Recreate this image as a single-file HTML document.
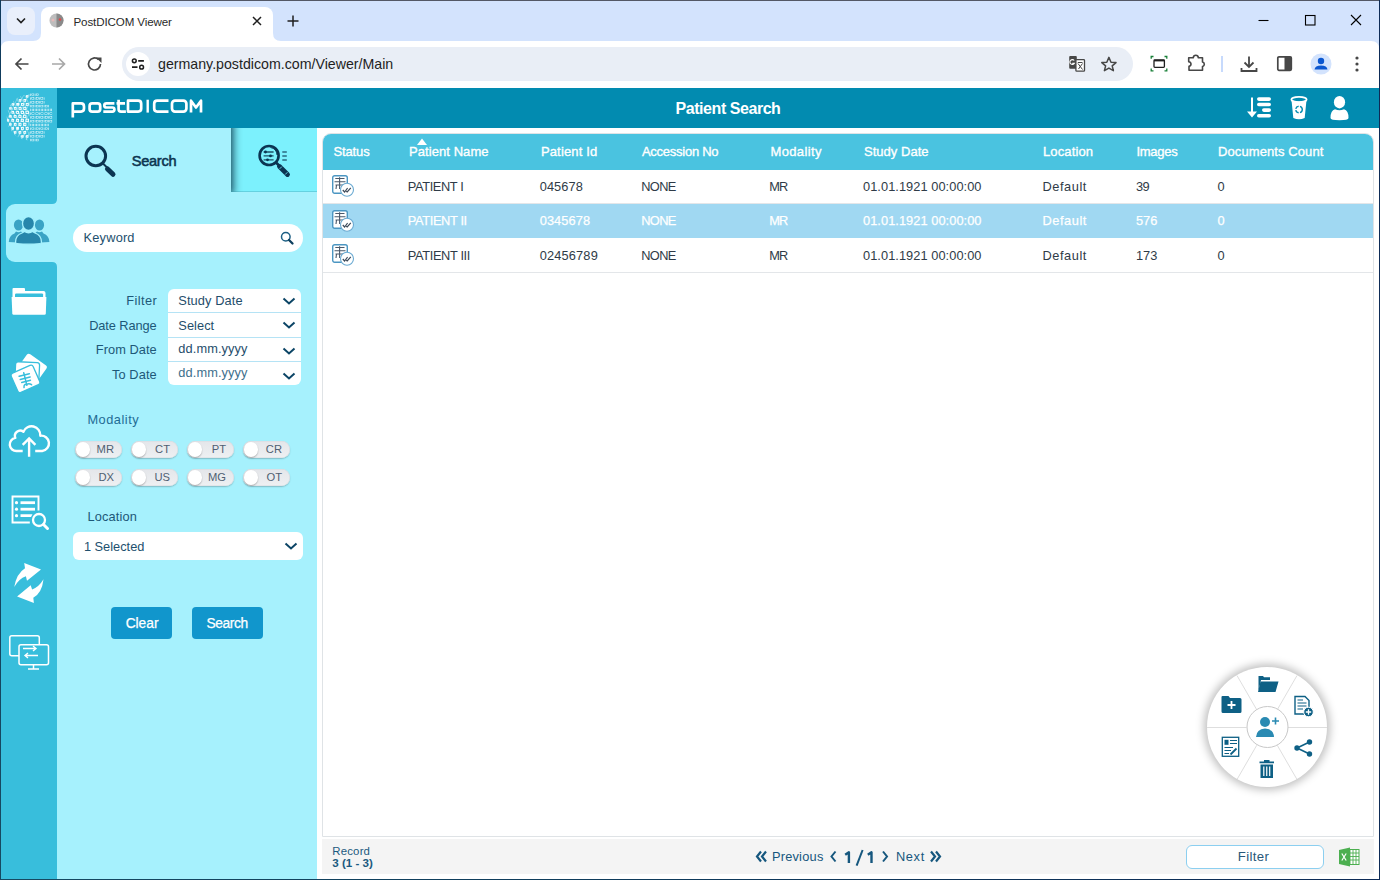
<!DOCTYPE html><html><head><meta charset="utf-8"><style>
*{box-sizing:border-box;margin:0;padding:0}
html,body{width:1380px;height:880px;overflow:hidden;background:#fff;font-family:"Liberation Sans",sans-serif}
.t{position:absolute;white-space:nowrap;line-height:1}
.a{position:absolute}
svg{position:absolute;overflow:visible}
</style></head><body>
<div class="a" style="left:0;top:0;width:1380px;height:41px;background:#d3e3fd"></div><div class="a" style="left:7px;top:7px;width:28px;height:28px;border-radius:8px;background:#e9effb"></div><svg style="left:0;top:0" width="40" height="40"><path d="M17 18.5 L21 22.5 L25 18.5" fill="none" stroke="#1f1f1f" stroke-width="1.6"/></svg><div class="a" style="left:41px;top:7px;width:232px;height:35px;background:#fff;border-radius:8px 8px 0 0"></div><svg style="left:33px;top:33px" width="8" height="8"><path d="M0 8 Q8 8 8 0 L8 8 Z" fill="#fff"/></svg><svg style="left:273px;top:33px" width="8" height="8"><path d="M8 8 Q0 8 0 0 L0 8 Z" fill="#fff"/></svg><svg style="left:49px;top:13px" width="15" height="15"><circle cx="7.5" cy="7.5" r="7" fill="#bdbdbd"/><path d="M7.5 0.5 A7 7 0 0 1 7.5 14.5 Z" fill="#8a8a8a"/><circle cx="11" cy="6.5" r="1.3" fill="#e04848"/><circle cx="4" cy="7" r="1.5" fill="#f0b8b8" opacity=".8"/></svg><div class="t" style="left:73.5px;top:16.18px;font-size:11.6px;color:#2a2a2a;font-weight:normal;letter-spacing:-0.123px;">PostDICOM Viewer</div>
<svg style="left:250px;top:14px" width="14" height="14"><path d="M3 3 L11 11 M11 3 L3 11" stroke="#1f1f1f" stroke-width="1.5"/></svg><svg style="left:285px;top:13px" width="16" height="16"><path d="M8 2.5 V13.5 M2.5 8 H13.5" stroke="#1f1f1f" stroke-width="1.5"/></svg><svg style="left:1250px;top:8px" width="120" height="24"><path d="M8.5 12.5 H18.5" stroke="#000" stroke-width="1.1"/><rect x="55.5" y="7.5" width="9.5" height="9.5" fill="none" stroke="#000" stroke-width="1.1"/><path d="M101 7 L111 17 M111 7 L101 17" stroke="#000" stroke-width="1.1"/></svg><div class="a" style="left:0;top:41px;width:1380px;height:47px;background:#fff"></div><svg style="left:1px;top:41px" width="9" height="9"><path d="M0 0 H8 Q0 0 0 8 Z" fill="#d3e3fd"/></svg><svg style="left:1370px;top:41px" width="9" height="9"><path d="M9 0 H1 Q9 0 9 8 Z" fill="#d3e3fd"/></svg><svg style="left:10px;top:54px" width="100" height="20"><path d="M18.5 10 H6.5 M11.5 4.5 L6 10 L11.5 15.5" fill="none" stroke="#474747" stroke-width="1.7"/><path d="M42 10 H54 M49 4.5 L54.5 10 L49 15.5" fill="none" stroke="#a8a8a8" stroke-width="1.7"/><path d="M90.5 10 A6 6 0 1 1 88.6 5.6" fill="none" stroke="#474747" stroke-width="1.7"/><path d="M86 3.5 L91.5 3.5 L91.5 9 Z" fill="#474747"/></svg><div class="a" style="left:122px;top:47px;width:1011px;height:34px;border-radius:17px;background:#e9eef6"></div><div class="a" style="left:126px;top:52px;width:24px;height:24px;border-radius:12px;background:#fff"></div><svg style="left:126px;top:52px" width="24" height="24"><path d="M12.2 8.8 H17.9 M6 15.2 H11.5" stroke="#1f1f1f" stroke-width="1.7"/><circle cx="8.3" cy="8.8" r="1.9" fill="none" stroke="#1f1f1f" stroke-width="1.5"/><circle cx="15.6" cy="15.2" r="1.9" fill="none" stroke="#1f1f1f" stroke-width="1.5"/></svg><div class="t" style="left:158px;top:57.48px;font-size:14.2px;color:#1f1f1f;font-weight:normal;">germany.postdicom.com/Viewer/Main</div>
<svg style="left:1060px;top:50px" width="150" height="28"><rect x="9.2" y="6" width="7.6" height="12.7" rx="1" fill="#474747"/><path d="M14.2 10.5 A2.4 2.4 0 1 0 14.4 13.2 H12.3" fill="none" stroke="#fff" stroke-width="1.1"/><rect x="15.9" y="9.6" width="8.6" height="11.6" rx="0.8" fill="#fff" stroke="#474747" stroke-width="1.3"/><path d="M18 13.5 L22.5 19.5 M22.5 13.5 L18.5 19 M17.8 12.5 H22.5" stroke="#474747" stroke-width="1"/><path d="M48.9 7.4 L51 12.2 L56 12.6 L52.2 15.9 L53.4 20.7 L48.9 18.1 L44.4 20.7 L45.6 15.9 L41.8 12.6 L46.8 12.2 Z" fill="none" stroke="#474747" stroke-width="1.5" stroke-linejoin="round"/><rect x="94" y="9.9" width="10.4" height="7.5" rx="0.8" fill="none" stroke="#1f1f1f" stroke-width="1.3"/><path d="M94 10.6 H104.4" stroke="#1f1f1f" stroke-width="1.6"/><path d="M91.2 8.8 V6.5 H93.5 M104.5 6.5 H106.8 V8.8 M106.8 18.5 V20.8 H104.5 M93.5 20.8 H91.2 V18.5" fill="none" stroke="#188038" stroke-width="1.3"/><path d="M128.7 7.8 H133.2 Q133.5 5.3 135.8 5.3 Q138.1 5.3 138.4 7.8 H142.5 V12 Q144.3 12.4 144.3 14.3 Q144.3 16.2 142.5 16.6 V20.2 H129 V16.4 Q131 16.1 131 14.1 Q131 12.1 128.7 11.8 Z" fill="none" stroke="#474747" stroke-width="1.6" stroke-linejoin="round"/></svg><div class="a" style="left:1221px;top:56px;width:2px;height:16px;background:#c7dafc"></div><svg style="left:1239px;top:54px" width="20" height="20"><path d="M10 2.5 V13 M5.5 8.5 L10 13 L14.5 8.5" fill="none" stroke="#474747" stroke-width="1.8"/><path d="M2.5 14 V17 H17.5 V14" fill="none" stroke="#474747" stroke-width="1.8"/></svg><svg style="left:1276px;top:55px" width="18" height="18"><rect x="1.8" y="1.8" width="13.5" height="13.5" rx="1.2" fill="none" stroke="#474747" stroke-width="1.7"/><rect x="8.5" y="1.8" width="6.8" height="13.5" fill="#474747"/></svg><svg style="left:1310px;top:53px" width="22" height="22"><circle cx="11" cy="11" r="10.5" fill="#d3e3fd"/><circle cx="11" cy="8" r="3.2" fill="#0b57d0"/><path d="M4.5 16.5 Q5 12.5 11 12.5 Q17 12.5 17.5 16.5 Z" fill="#0b57d0"/></svg><svg style="left:1350px;top:55px" width="14" height="18"><circle cx="7" cy="3" r="1.6" fill="#474747"/><circle cx="7" cy="9" r="1.6" fill="#474747"/><circle cx="7" cy="15" r="1.6" fill="#474747"/></svg><div class="a" style="left:0;top:88px;width:57px;height:792px;background:#38bedc"></div><div class="a" style="left:57px;top:88px;width:1323px;height:40px;background:#028bb0"></div><div class="a" style="left:57px;top:128px;width:260px;height:752px;background:#a6f1fd"></div><div class="a" style="left:317px;top:128px;width:1063px;height:752px;background:#fff"></div><svg style="left:0;top:0" width="60" height="150"><rect x="30.30" y="93.60" width="0.6" height="2.4" fill="#fff" opacity="0.9"/><rect x="31.75" y="93.90" width="2.1" height="1.8" fill="none" stroke="#fff" stroke-width="0.5" opacity="0.9"/><rect x="34.80" y="93.60" width="0.6" height="2.4" fill="#fff" opacity="0.9"/><rect x="36.25" y="93.90" width="2.1" height="1.8" fill="none" stroke="#fff" stroke-width="0.5" opacity="0.9"/><rect x="30.30" y="97.37" width="0.6" height="2.4" fill="#fff" opacity="0.9"/><rect x="31.75" y="97.67" width="2.1" height="1.8" fill="none" stroke="#fff" stroke-width="0.5" opacity="0.9"/><rect x="34.80" y="97.37" width="0.6" height="2.4" fill="#fff" opacity="0.9"/><rect x="36.25" y="97.67" width="2.1" height="1.8" fill="none" stroke="#fff" stroke-width="0.5" opacity="0.9"/><rect x="39.30" y="97.37" width="0.6" height="2.4" fill="#fff" opacity="0.9"/><rect x="40.75" y="97.67" width="2.1" height="1.8" fill="none" stroke="#fff" stroke-width="0.5" opacity="0.9"/><rect x="43.80" y="97.37" width="0.6" height="2.4" fill="#fff" opacity="0.9"/><rect x="30.30" y="101.14" width="0.6" height="2.4" fill="#fff" opacity="0.9"/><rect x="31.75" y="101.44" width="2.1" height="1.8" fill="none" stroke="#fff" stroke-width="0.5" opacity="0.9"/><rect x="34.80" y="101.14" width="0.6" height="2.4" fill="#fff" opacity="0.9"/><rect x="36.25" y="101.44" width="2.1" height="1.8" fill="none" stroke="#fff" stroke-width="0.5" opacity="0.9"/><rect x="39.30" y="101.14" width="0.6" height="2.4" fill="#fff" opacity="0.9"/><rect x="40.75" y="101.44" width="2.1" height="1.8" fill="none" stroke="#fff" stroke-width="0.5" opacity="0.9"/><rect x="43.80" y="101.14" width="0.6" height="2.4" fill="#fff" opacity="0.9"/><rect x="30.30" y="104.91" width="0.6" height="2.4" fill="#fff" opacity="0.9"/><rect x="31.75" y="105.21" width="2.1" height="1.8" fill="none" stroke="#fff" stroke-width="0.5" opacity="0.9"/><rect x="34.80" y="104.91" width="0.6" height="2.4" fill="#fff" opacity="0.9"/><rect x="36.25" y="105.21" width="2.1" height="1.8" fill="none" stroke="#fff" stroke-width="0.5" opacity="0.9"/><rect x="39.30" y="104.91" width="0.6" height="2.4" fill="#fff" opacity="0.9"/><rect x="40.75" y="105.21" width="2.1" height="1.8" fill="none" stroke="#fff" stroke-width="0.5" opacity="0.9"/><rect x="43.80" y="104.91" width="0.6" height="2.4" fill="#fff" opacity="0.9"/><rect x="45.25" y="105.21" width="2.1" height="1.8" fill="none" stroke="#fff" stroke-width="0.5" opacity="0.9"/><rect x="48.30" y="104.91" width="0.6" height="2.4" fill="#fff" opacity="0.9"/><rect x="30.30" y="108.68" width="0.6" height="2.4" fill="#fff" opacity="0.9"/><rect x="31.80" y="108.68" width="0.7" height="2.4" fill="#fff" opacity="0.9"/><rect x="33.20" y="108.68" width="0.7" height="2.4" fill="#fff" opacity="0.9"/><rect x="34.80" y="108.68" width="0.6" height="2.4" fill="#fff" opacity="0.9"/><rect x="36.30" y="108.68" width="0.7" height="2.4" fill="#fff" opacity="0.9"/><rect x="37.70" y="108.68" width="0.7" height="2.4" fill="#fff" opacity="0.9"/><rect x="39.30" y="108.68" width="0.6" height="2.4" fill="#fff" opacity="0.9"/><rect x="40.80" y="108.68" width="0.7" height="2.4" fill="#fff" opacity="0.9"/><rect x="42.20" y="108.68" width="0.7" height="2.4" fill="#fff" opacity="0.9"/><rect x="43.80" y="108.68" width="0.6" height="2.4" fill="#fff" opacity="0.9"/><rect x="45.30" y="108.68" width="0.7" height="2.4" fill="#fff" opacity="0.9"/><rect x="46.70" y="108.68" width="0.7" height="2.4" fill="#fff" opacity="0.9"/><rect x="48.30" y="108.68" width="0.6" height="2.4" fill="#fff" opacity="0.9"/><rect x="49.80" y="108.68" width="0.7" height="2.4" fill="#fff" opacity="0.9"/><rect x="51.20" y="108.68" width="0.7" height="2.4" fill="#fff" opacity="0.9"/><rect x="30.30" y="112.45" width="0.6" height="2.4" fill="#fff" opacity="0.9"/><rect x="31.75" y="112.75" width="2.1" height="1.8" fill="none" stroke="#fff" stroke-width="0.5" opacity="0.9"/><rect x="34.80" y="112.45" width="0.6" height="2.4" fill="#fff" opacity="0.9"/><rect x="36.25" y="112.75" width="2.1" height="1.8" fill="none" stroke="#fff" stroke-width="0.5" opacity="0.9"/><rect x="39.30" y="112.45" width="0.6" height="2.4" fill="#fff" opacity="0.9"/><rect x="40.75" y="112.75" width="2.1" height="1.8" fill="none" stroke="#fff" stroke-width="0.5" opacity="0.9"/><rect x="43.80" y="112.45" width="0.6" height="2.4" fill="#fff" opacity="0.9"/><rect x="45.25" y="112.75" width="2.1" height="1.8" fill="none" stroke="#fff" stroke-width="0.5" opacity="0.9"/><rect x="48.30" y="112.45" width="0.6" height="2.4" fill="#fff" opacity="0.9"/><rect x="49.75" y="112.75" width="2.1" height="1.8" fill="none" stroke="#fff" stroke-width="0.5" opacity="0.9"/><rect x="30.30" y="116.22" width="0.6" height="2.4" fill="#fff" opacity="0.9"/><rect x="31.75" y="116.52" width="2.1" height="1.8" fill="none" stroke="#fff" stroke-width="0.5" opacity="0.9"/><rect x="34.80" y="116.22" width="0.6" height="2.4" fill="#fff" opacity="0.9"/><rect x="36.25" y="116.52" width="2.1" height="1.8" fill="none" stroke="#fff" stroke-width="0.5" opacity="0.9"/><rect x="39.30" y="116.22" width="0.6" height="2.4" fill="#fff" opacity="0.9"/><rect x="40.75" y="116.52" width="2.1" height="1.8" fill="none" stroke="#fff" stroke-width="0.5" opacity="0.9"/><rect x="43.80" y="116.22" width="0.6" height="2.4" fill="#fff" opacity="0.9"/><rect x="45.25" y="116.52" width="2.1" height="1.8" fill="none" stroke="#fff" stroke-width="0.5" opacity="0.9"/><rect x="48.30" y="116.22" width="0.6" height="2.4" fill="#fff" opacity="0.9"/><rect x="49.75" y="116.52" width="2.1" height="1.8" fill="none" stroke="#fff" stroke-width="0.5" opacity="0.9"/><rect x="30.30" y="119.99" width="0.6" height="2.4" fill="#fff" opacity="0.9"/><rect x="31.75" y="120.29" width="2.1" height="1.8" fill="none" stroke="#fff" stroke-width="0.5" opacity="0.9"/><rect x="34.80" y="119.99" width="0.6" height="2.4" fill="#fff" opacity="0.9"/><rect x="36.25" y="120.29" width="2.1" height="1.8" fill="none" stroke="#fff" stroke-width="0.5" opacity="0.9"/><rect x="39.30" y="119.99" width="0.6" height="2.4" fill="#fff" opacity="0.9"/><rect x="40.75" y="120.29" width="2.1" height="1.8" fill="none" stroke="#fff" stroke-width="0.5" opacity="0.9"/><rect x="43.80" y="119.99" width="0.6" height="2.4" fill="#fff" opacity="0.9"/><rect x="45.25" y="120.29" width="2.1" height="1.8" fill="none" stroke="#fff" stroke-width="0.5" opacity="0.9"/><rect x="48.30" y="119.99" width="0.6" height="2.4" fill="#fff" opacity="0.9"/><rect x="49.75" y="120.29" width="2.1" height="1.8" fill="none" stroke="#fff" stroke-width="0.5" opacity="0.9"/><rect x="30.30" y="123.76" width="0.6" height="2.4" fill="#fff" opacity="0.9"/><rect x="31.80" y="123.76" width="0.7" height="2.4" fill="#fff" opacity="0.9"/><rect x="33.20" y="123.76" width="0.7" height="2.4" fill="#fff" opacity="0.9"/><rect x="34.80" y="123.76" width="0.6" height="2.4" fill="#fff" opacity="0.9"/><rect x="36.30" y="123.76" width="0.7" height="2.4" fill="#fff" opacity="0.9"/><rect x="37.70" y="123.76" width="0.7" height="2.4" fill="#fff" opacity="0.9"/><rect x="39.30" y="123.76" width="0.6" height="2.4" fill="#fff" opacity="0.9"/><rect x="40.80" y="123.76" width="0.7" height="2.4" fill="#fff" opacity="0.9"/><rect x="42.20" y="123.76" width="0.7" height="2.4" fill="#fff" opacity="0.9"/><rect x="43.80" y="123.76" width="0.6" height="2.4" fill="#fff" opacity="0.9"/><rect x="45.30" y="123.76" width="0.7" height="2.4" fill="#fff" opacity="0.9"/><rect x="46.70" y="123.76" width="0.7" height="2.4" fill="#fff" opacity="0.9"/><rect x="48.30" y="123.76" width="0.6" height="2.4" fill="#fff" opacity="0.9"/><rect x="30.30" y="127.53" width="0.6" height="2.4" fill="#fff" opacity="0.9"/><rect x="31.75" y="127.83" width="2.1" height="1.8" fill="none" stroke="#fff" stroke-width="0.5" opacity="0.9"/><rect x="34.80" y="127.53" width="0.6" height="2.4" fill="#fff" opacity="0.9"/><rect x="36.25" y="127.83" width="2.1" height="1.8" fill="none" stroke="#fff" stroke-width="0.5" opacity="0.9"/><rect x="39.30" y="127.53" width="0.6" height="2.4" fill="#fff" opacity="0.9"/><rect x="40.75" y="127.83" width="2.1" height="1.8" fill="none" stroke="#fff" stroke-width="0.5" opacity="0.9"/><rect x="43.80" y="127.53" width="0.6" height="2.4" fill="#fff" opacity="0.9"/><rect x="45.25" y="127.83" width="2.1" height="1.8" fill="none" stroke="#fff" stroke-width="0.5" opacity="0.9"/><rect x="48.30" y="127.53" width="0.6" height="2.4" fill="#fff" opacity="0.9"/><rect x="30.30" y="131.30" width="0.6" height="2.4" fill="#fff" opacity="0.9"/><rect x="31.75" y="131.60" width="2.1" height="1.8" fill="none" stroke="#fff" stroke-width="0.5" opacity="0.9"/><rect x="34.80" y="131.30" width="0.6" height="2.4" fill="#fff" opacity="0.9"/><rect x="36.25" y="131.60" width="2.1" height="1.8" fill="none" stroke="#fff" stroke-width="0.5" opacity="0.9"/><rect x="39.30" y="131.30" width="0.6" height="2.4" fill="#fff" opacity="0.9"/><rect x="40.75" y="131.60" width="2.1" height="1.8" fill="none" stroke="#fff" stroke-width="0.5" opacity="0.9"/><rect x="43.80" y="131.30" width="0.6" height="2.4" fill="#fff" opacity="0.9"/><rect x="30.30" y="135.07" width="0.6" height="2.4" fill="#fff" opacity="0.9"/><rect x="31.75" y="135.37" width="2.1" height="1.8" fill="none" stroke="#fff" stroke-width="0.5" opacity="0.9"/><rect x="34.80" y="135.07" width="0.6" height="2.4" fill="#fff" opacity="0.9"/><rect x="36.25" y="135.37" width="2.1" height="1.8" fill="none" stroke="#fff" stroke-width="0.5" opacity="0.9"/><rect x="39.30" y="135.07" width="0.6" height="2.4" fill="#fff" opacity="0.9"/><rect x="40.75" y="135.37" width="2.1" height="1.8" fill="none" stroke="#fff" stroke-width="0.5" opacity="0.9"/><rect x="43.80" y="135.07" width="0.6" height="2.4" fill="#fff" opacity="0.9"/><rect x="30.30" y="138.84" width="0.6" height="2.4" fill="#fff" opacity="0.9"/><rect x="31.75" y="139.14" width="2.1" height="1.8" fill="none" stroke="#fff" stroke-width="0.5" opacity="0.9"/><rect x="34.80" y="138.84" width="0.6" height="2.4" fill="#fff" opacity="0.9"/><rect x="36.25" y="139.14" width="2.1" height="1.8" fill="none" stroke="#fff" stroke-width="0.5" opacity="0.9"/><clipPath id="lc"><path d="M29.8 94.2 A23.2 23.2 0 0 0 29.8 140.6 Z"/></clipPath><g clip-path="url(#lc)"><rect x="26.44" y="95.64" width="1.52" height="1.52" fill="none" stroke="#fff" stroke-width="0.9"/><rect x="23.94" y="99.54" width="1.71" height="1.71" fill="none" stroke="#fff" stroke-width="0.9"/><rect x="19.20" y="99.60" width="1.61" height="1.61" fill="none" stroke="#fff" stroke-width="0.9"/><rect x="26.22" y="103.42" width="1.96" height="1.96" fill="none" stroke="#fff" stroke-width="0.9"/><rect x="21.47" y="103.47" width="1.87" height="1.87" fill="none" stroke="#fff" stroke-width="0.9"/><rect x="16.74" y="103.54" width="1.71" height="1.71" fill="none" stroke="#fff" stroke-width="0.9"/><rect x="12.04" y="103.64" width="1.51" height="1.51" fill="none" stroke="#fff" stroke-width="0.9"/><rect x="23.73" y="107.33" width="2.13" height="2.13" fill="none" stroke="#fff" stroke-width="0.9"/><rect x="19.02" y="107.42" width="1.97" height="1.97" fill="none" stroke="#fff" stroke-width="0.9"/><rect x="14.32" y="107.52" width="1.75" height="1.75" fill="none" stroke="#fff" stroke-width="0.9"/><rect x="9.64" y="107.64" width="1.52" height="1.52" fill="none" stroke="#fff" stroke-width="0.9"/><rect x="26.00" y="111.20" width="2.39" height="2.39" fill="none" stroke="#fff" stroke-width="0.9"/><rect x="21.29" y="111.29" width="2.21" height="2.21" fill="none" stroke="#fff" stroke-width="0.9"/><rect x="16.61" y="111.41" width="1.98" height="1.98" fill="none" stroke="#fff" stroke-width="0.9"/><rect x="11.94" y="111.54" width="1.72" height="1.72" fill="none" stroke="#fff" stroke-width="0.9"/><rect x="23.58" y="115.18" width="2.43" height="2.43" fill="none" stroke="#fff" stroke-width="0.9"/><rect x="18.92" y="115.32" width="2.16" height="2.16" fill="none" stroke="#fff" stroke-width="0.9"/><rect x="14.25" y="115.45" width="1.90" height="1.90" fill="none" stroke="#fff" stroke-width="0.9"/><rect x="9.59" y="115.59" width="1.63" height="1.63" fill="none" stroke="#fff" stroke-width="0.9"/><rect x="25.96" y="119.16" width="2.49" height="2.49" fill="none" stroke="#fff" stroke-width="0.9"/><rect x="21.27" y="119.27" width="2.27" height="2.27" fill="none" stroke="#fff" stroke-width="0.9"/><rect x="16.59" y="119.39" width="2.01" height="2.01" fill="none" stroke="#fff" stroke-width="0.9"/><rect x="11.93" y="119.53" width="1.75" height="1.75" fill="none" stroke="#fff" stroke-width="0.9"/><rect x="7.26" y="119.66" width="1.48" height="1.48" fill="none" stroke="#fff" stroke-width="0.9"/><rect x="23.69" y="123.29" width="2.23" height="2.23" fill="none" stroke="#fff" stroke-width="0.9"/><rect x="18.98" y="123.38" width="2.04" height="2.04" fill="none" stroke="#fff" stroke-width="0.9"/><rect x="14.30" y="123.50" width="1.81" height="1.81" fill="none" stroke="#fff" stroke-width="0.9"/><rect x="9.62" y="123.62" width="1.56" height="1.56" fill="none" stroke="#fff" stroke-width="0.9"/><rect x="26.16" y="127.36" width="2.07" height="2.07" fill="none" stroke="#fff" stroke-width="0.9"/><rect x="21.42" y="127.42" width="1.97" height="1.97" fill="none" stroke="#fff" stroke-width="0.9"/><rect x="16.70" y="127.50" width="1.79" height="1.79" fill="none" stroke="#fff" stroke-width="0.9"/><rect x="12.01" y="127.61" width="1.58" height="1.58" fill="none" stroke="#fff" stroke-width="0.9"/><rect x="23.89" y="131.49" width="1.82" height="1.82" fill="none" stroke="#fff" stroke-width="0.9"/><rect x="19.15" y="131.55" width="1.71" height="1.71" fill="none" stroke="#fff" stroke-width="0.9"/><rect x="14.43" y="131.63" width="1.54" height="1.54" fill="none" stroke="#fff" stroke-width="0.9"/><rect x="26.39" y="135.59" width="1.63" height="1.63" fill="none" stroke="#fff" stroke-width="0.9"/><rect x="21.62" y="135.62" width="1.56" height="1.56" fill="none" stroke="#fff" stroke-width="0.9"/><path d="M-63.2 92 L-37.2 146" stroke="#fff" stroke-width="0.45" opacity="0.75"/><path d="M-37.2 92 L-63.2 146" stroke="#fff" stroke-width="0.45" opacity="0.75"/><path d="M-58.4 92 L-32.4 146" stroke="#fff" stroke-width="0.45" opacity="0.75"/><path d="M-32.4 92 L-58.4 146" stroke="#fff" stroke-width="0.45" opacity="0.75"/><path d="M-53.6 92 L-27.6 146" stroke="#fff" stroke-width="0.45" opacity="0.75"/><path d="M-27.6 92 L-53.6 146" stroke="#fff" stroke-width="0.45" opacity="0.75"/><path d="M-48.8 92 L-22.8 146" stroke="#fff" stroke-width="0.45" opacity="0.75"/><path d="M-22.8 92 L-48.8 146" stroke="#fff" stroke-width="0.45" opacity="0.75"/><path d="M-44.0 92 L-18.0 146" stroke="#fff" stroke-width="0.45" opacity="0.75"/><path d="M-18.0 92 L-44.0 146" stroke="#fff" stroke-width="0.45" opacity="0.75"/><path d="M-39.2 92 L-13.2 146" stroke="#fff" stroke-width="0.45" opacity="0.75"/><path d="M-13.2 92 L-39.2 146" stroke="#fff" stroke-width="0.45" opacity="0.75"/><path d="M-34.4 92 L-8.4 146" stroke="#fff" stroke-width="0.45" opacity="0.75"/><path d="M-8.4 92 L-34.4 146" stroke="#fff" stroke-width="0.45" opacity="0.75"/><path d="M-29.6 92 L-3.6 146" stroke="#fff" stroke-width="0.45" opacity="0.75"/><path d="M-3.6 92 L-29.6 146" stroke="#fff" stroke-width="0.45" opacity="0.75"/><path d="M-24.8 92 L1.2 146" stroke="#fff" stroke-width="0.45" opacity="0.75"/><path d="M1.2 92 L-24.8 146" stroke="#fff" stroke-width="0.45" opacity="0.75"/><path d="M-20.0 92 L6.0 146" stroke="#fff" stroke-width="0.45" opacity="0.75"/><path d="M6.0 92 L-20.0 146" stroke="#fff" stroke-width="0.45" opacity="0.75"/><path d="M-15.2 92 L10.8 146" stroke="#fff" stroke-width="0.45" opacity="0.75"/><path d="M10.8 92 L-15.2 146" stroke="#fff" stroke-width="0.45" opacity="0.75"/><path d="M-10.4 92 L15.6 146" stroke="#fff" stroke-width="0.45" opacity="0.75"/><path d="M15.6 92 L-10.4 146" stroke="#fff" stroke-width="0.45" opacity="0.75"/><path d="M-5.6 92 L20.4 146" stroke="#fff" stroke-width="0.45" opacity="0.75"/><path d="M20.4 92 L-5.6 146" stroke="#fff" stroke-width="0.45" opacity="0.75"/><path d="M-0.8 92 L25.2 146" stroke="#fff" stroke-width="0.45" opacity="0.75"/><path d="M25.2 92 L-0.8 146" stroke="#fff" stroke-width="0.45" opacity="0.75"/><path d="M4.0 92 L30.0 146" stroke="#fff" stroke-width="0.45" opacity="0.75"/><path d="M30.0 92 L4.0 146" stroke="#fff" stroke-width="0.45" opacity="0.75"/><path d="M8.8 92 L34.8 146" stroke="#fff" stroke-width="0.45" opacity="0.75"/><path d="M34.8 92 L8.8 146" stroke="#fff" stroke-width="0.45" opacity="0.75"/><path d="M13.6 92 L39.6 146" stroke="#fff" stroke-width="0.45" opacity="0.75"/><path d="M39.6 92 L13.6 146" stroke="#fff" stroke-width="0.45" opacity="0.75"/><path d="M18.4 92 L44.4 146" stroke="#fff" stroke-width="0.45" opacity="0.75"/><path d="M44.4 92 L18.4 146" stroke="#fff" stroke-width="0.45" opacity="0.75"/><path d="M23.2 92 L49.2 146" stroke="#fff" stroke-width="0.45" opacity="0.75"/><path d="M49.2 92 L23.2 146" stroke="#fff" stroke-width="0.45" opacity="0.75"/><path d="M28.0 92 L54.0 146" stroke="#fff" stroke-width="0.45" opacity="0.75"/><path d="M54.0 92 L28.0 146" stroke="#fff" stroke-width="0.45" opacity="0.75"/><path d="M32.8 92 L58.8 146" stroke="#fff" stroke-width="0.45" opacity="0.75"/><path d="M58.8 92 L32.8 146" stroke="#fff" stroke-width="0.45" opacity="0.75"/><path d="M37.6 92 L63.6 146" stroke="#fff" stroke-width="0.45" opacity="0.75"/><path d="M63.6 92 L37.6 146" stroke="#fff" stroke-width="0.45" opacity="0.75"/><path d="M42.4 92 L68.4 146" stroke="#fff" stroke-width="0.45" opacity="0.75"/><path d="M68.4 92 L42.4 146" stroke="#fff" stroke-width="0.45" opacity="0.75"/><path d="M47.2 92 L73.2 146" stroke="#fff" stroke-width="0.45" opacity="0.75"/><path d="M73.2 92 L47.2 146" stroke="#fff" stroke-width="0.45" opacity="0.75"/><path d="M52.0 92 L78.0 146" stroke="#fff" stroke-width="0.45" opacity="0.75"/><path d="M78.0 92 L52.0 146" stroke="#fff" stroke-width="0.45" opacity="0.75"/><path d="M56.8 92 L82.8 146" stroke="#fff" stroke-width="0.45" opacity="0.75"/><path d="M82.8 92 L56.8 146" stroke="#fff" stroke-width="0.45" opacity="0.75"/><path d="M61.6 92 L87.6 146" stroke="#fff" stroke-width="0.45" opacity="0.75"/><path d="M87.6 92 L61.6 146" stroke="#fff" stroke-width="0.45" opacity="0.75"/><path d="M66.4 92 L92.4 146" stroke="#fff" stroke-width="0.45" opacity="0.75"/><path d="M92.4 92 L66.4 146" stroke="#fff" stroke-width="0.45" opacity="0.75"/></g></svg><svg style="left:0;top:0" width="220" height="125"><g fill="none" stroke="#fff" stroke-width="2.7" stroke-linejoin="round"><path d="M72.8 117.6 V103.4 H81 Q84 103.4 84 106.4 V108.6 Q84 111.6 81 111.6 H72.8"/><rect x="89.6" y="103.4" width="10.6" height="8.2" rx="2.6"/><path d="M114.4 103.4 H106.5 Q104.3 103.4 104.3 105.4 Q104.3 107.5 106.5 107.5 H112.4 Q114.4 107.5 114.4 109.5 Q114.4 111.6 112.4 111.6 H103.3"/><path d="M118.6 99.7 V109.3 Q118.6 111.6 121 111.6 H125.9 M116.5 103.4 H125"/><path d="M128 100.7 H138.2 Q141.2 100.7 141.2 103.7 V108.6 Q141.2 111.6 138.2 111.6 H128 Z"/><path d="M147.7 99.7 V112.6" stroke-width="2.4"/><path d="M168.5 100.7 H157.2 Q154.2 100.7 154.2 103.7 V108.6 Q154.2 111.6 157.2 111.6 H168.5"/><rect x="172" y="100.7" width="14.4" height="10.9" rx="3"/><path d="M191 112.6 V100.7 L196 107.5 L201 100.7 V112.6"/></g></svg><div class="t" style="left:728px;transform:translateX(-50%);top:100.76px;font-size:16px;color:#fff;font-weight:bold;letter-spacing:-0.45px;">Patient Search</div>
<svg style="left:1240px;top:92px" width="40" height="32"><path d="M12 5.5 V21" stroke="#fff" stroke-width="2"/><path d="M7 19.5 H17 L12 25.5 Z" fill="#fff"/><rect x="17" y="5.3" width="14" height="3.6" rx="1.8" fill="#fff"/><rect x="17" y="10.7" width="14" height="3.6" rx="1.8" fill="#fff"/><rect x="22" y="16.3" width="9" height="3.6" rx="1.8" fill="#fff"/><rect x="17" y="21.9" width="14" height="3.6" rx="1.8" fill="#fff"/></svg><svg style="left:1286px;top:92px" width="26" height="32"><ellipse cx="13" cy="7.5" rx="7.6" ry="2.6" fill="none" stroke="#fff" stroke-width="1.8"/><path d="M5.5 8 L7.3 26 Q13 28.5 18.7 26 L20.5 8 Q13 11 5.5 8 Z" fill="#fff"/><circle cx="13" cy="17.5" r="3.3" fill="none" stroke="#028bb0" stroke-width="1.4" stroke-dasharray="4 1.4"/></svg><svg style="left:1328px;top:94px" width="24" height="30"><ellipse cx="11.5" cy="8.2" rx="5.6" ry="6.2" fill="#fff"/><path d="M2.5 24 Q2.5 16.2 7 15.2 Q11.5 17.5 16 15.2 Q20.5 16.2 20.5 24 Q20.5 26.2 11.5 26.2 Q2.5 26.2 2.5 24 Z" fill="#fff"/></svg><div class="a" style="left:6px;top:204px;width:51px;height:58px;background:#a6f1fd;border-radius:9px 0 0 9px"></div><svg style="left:52px;top:199px" width="5" height="5"><path d="M5 5 H0 Q5 5 5 0 Z" fill="#a6f1fd"/></svg><svg style="left:52px;top:262px" width="5" height="5"><path d="M5 0 H0 Q5 0 5 5 Z" fill="#a6f1fd"/></svg><svg style="left:0;top:190px" width="60" height="60"><g fill="#3aa3c5"><ellipse cx="18.5" cy="35" rx="4.6" ry="5.6"/><path d="M8.8 52 Q9 45.5 14.5 43.5 L16 41.5 Q18.5 43 21 41.5 L24 44 Q18 47 17.5 52.5 Z"/><ellipse cx="39.5" cy="35" rx="4.6" ry="5.6"/><path d="M49.4 52 Q49.2 45.5 43.5 43.5 L42 41.5 Q39.5 43 37 41.5 L34 44 Q40 47 40.5 52.5 Z"/></g><ellipse cx="28.5" cy="33.5" rx="6" ry="7" fill="#2786ab" stroke="#a6f1fd" stroke-width="1.3"/><path d="M15.5 52.5 Q15.5 45 22 43 L24.5 41.5 Q28.5 44 32.5 41.5 L35 43 Q41.5 45 41.5 52.5 Q41.5 54.2 28.5 54.2 Q15.5 54.2 15.5 52.5 Z" fill="#2786ab" stroke="#a6f1fd" stroke-width="1.3"/></svg><svg style="left:6px;top:282px" width="46" height="38"><path d="M6.5 14.9 V7 Q6.5 6 7.5 6 H18 Q19 6 19 7 V8.9 H37.5 Q39.5 8.9 39.5 11 V14.9 Z" fill="#fff"/><path d="M9 16 V12.6 Q9 11.4 10.2 11.4 H35.9 Q37.1 11.4 37.1 12.6 V16 Z" fill="#38bedc"/><path d="M5.6 14.9 H40.4 L39.8 31.6 Q39.7 32.8 38.5 32.8 H7.6 Q6.4 32.8 6.3 31.6 Z" fill="#fff"/></svg><svg style="left:6px;top:348px" width="48" height="50"><g transform="rotate(35.5 25.9 20.3)"><rect x="13.9" y="9.8" width="24" height="21" rx="2.5" fill="#fff"/></g><g transform="rotate(2.7 21.2 24.7)"><rect x="9.2" y="14.2" width="24" height="21" rx="2.5" fill="#fff" stroke="#38bedc" stroke-width="1.3"/></g><g transform="rotate(-23.8 19.5 30.9)"><rect x="7.5" y="20.4" width="24" height="21" rx="2.5" fill="#fff" stroke="#38bedc" stroke-width="1.3"/></g><g transform="rotate(-14 19.5 31)" fill="none" stroke="#38bedc" stroke-width="1.5" stroke-linecap="round"><path d="M19.3 24.5 V37.5"/><path d="M14 26.8 H24.5 M14.3 30.2 H24.5 M15 33.4 H24"/><path d="M16 39 Q16.5 35.5 19.3 36.5 Q22 35.5 24 38"/></g></svg><svg style="left:8px;top:424px" width="44" height="36"><path d="M14.7 27 H8.8 A6.6 6.6 0 0 1 7.3 13.9 A5.3 5.3 0 0 1 15.4 7.7 A8.8 8.8 0 0 1 32.3 11.7 A7.7 7.7 0 0 1 34.2 27 H27.2" fill="none" stroke="#fff" stroke-width="2.4" stroke-linejoin="round"/><path d="M21.1 14.2 V32.7 M14.7 20.8 L21.1 14.4 L27.4 20.8" fill="none" stroke="#fff" stroke-width="2.4"/></svg><svg style="left:8px;top:494px" width="44" height="40"><path d="M21.8 28.5 H4.5 V2.5 H30.5 V16.5" fill="none" stroke="#fff" stroke-width="1.9"/><circle cx="8.5" cy="8.7" r="1.6" fill="#fff"/><circle cx="8.5" cy="15.2" r="1.6" fill="#fff"/><circle cx="8.5" cy="21.7" r="1.6" fill="#fff"/><rect x="12.5" y="7.3" width="14.5" height="2.8" fill="#fff"/><rect x="12.5" y="13.8" width="14.5" height="2.8" fill="#fff"/><path d="M12.5 20.3 H24.5 L23 23.1 H12.5 Z" fill="#fff"/><circle cx="31" cy="26" r="6" fill="none" stroke="#fff" stroke-width="2.3"/><path d="M35.5 30.5 L39.5 34.5" stroke="#fff" stroke-width="3" stroke-linecap="round"/></svg><svg style="left:8px;top:558px" width="44" height="50"><path d="M6.25 29 Q8.5 15.5 17 10.2 L16.2 5.1 L33 11.6 L19 22.7 L17.9 18.2 Q11 20.5 6.25 29 Z" fill="#fff"/><path d="M35.5 21.3 Q31 29 24.1 31.5 L22.7 27.3 L9.1 38.6 L25.9 44.9 L25.3 39.8 Q34 35 35.5 21.3 Z" fill="#fff"/></svg><svg style="left:8px;top:634px" width="44" height="40"><rect x="1.8" y="1.8" width="29.5" height="20" rx="2" fill="none" stroke="#fff" stroke-width="1.5"/><rect x="11" y="10.7" width="29.5" height="20" rx="2" fill="#38bedc" stroke="#fff" stroke-width="1.5"/><path d="M25.5 30.7 V34.5 M20 35 H31" stroke="#fff" stroke-width="1.5"/><path d="M15 14.5 H28 M25 12 L28 14.5 L25 17" fill="none" stroke="#fff" stroke-width="1.4"/><path d="M30 21.5 H17 M20 19 L17 21.5 L20 24" fill="none" stroke="#fff" stroke-width="1.4"/></svg><div class="a" style="left:231px;top:128px;width:86px;height:64px;background:#7cf1fd;overflow:hidden"><div class="a" style="left:-20px;top:-6px;width:20px;height:72px;box-shadow:1px 0 8px 1px rgba(0,35,55,.85)"></div><div class="a" style="left:0;top:63px;width:86px;height:1px;background:rgba(60,150,170,.35)"></div></div><svg style="left:80px;top:140px" width="40" height="40"><circle cx="15.8" cy="16" r="9.8" fill="none" stroke="#0b3552" stroke-width="3"/><path d="M22.5 23 L27.5 28" stroke="#0b3552" stroke-width="2"/><path d="M27.5 29 L33 34.3" stroke="#0b3552" stroke-width="5" stroke-linecap="round"/></svg><svg style="left:240px;top:130px" width="60" height="60"><circle cx="29.1" cy="25.5" r="9.5" fill="none" stroke="#0b3552" stroke-width="2.6"/><path d="M23.6 22 H33.6 M23.6 25.9 H33.6 M23.6 29.8 H33.6" stroke="#1d4f66" stroke-width="1.3"/><circle cx="25.5" cy="22" r="1.4" fill="#0b3552"/><circle cx="30.5" cy="25.9" r="1.4" fill="#0b3552"/><circle cx="27.5" cy="29.8" r="1.4" fill="#0b3552"/><path d="M30.5 17.5 A8 8 0 0 1 37 25" fill="none" stroke="#0b3552" stroke-width="0.9"/><path d="M42.3 22 H46.8 M42.3 26 H46.8 M42.3 30 H46.8" stroke="#2a6a80" stroke-width="1.6"/><path d="M36 32.5 L39 35.5" stroke="#0b3552" stroke-width="2.6"/><path d="M39.5 36.5 L47.5 44.5" stroke="#0b3552" stroke-width="4.8" stroke-linecap="round"/><path d="M39.6 38.9 L41.9 36.6 M45.2 44.5 L47.5 42.2" stroke="#7cf1fd" stroke-width="0.8"/></svg><div class="t" style="left:131.7px;top:154.24px;font-size:14.6px;color:#0c3550;font-weight:normal;-webkit-text-stroke:0.55px #0c3550;letter-spacing:-0.276px;">Search</div>
<div class="a" style="left:73px;top:224px;width:230px;height:28px;border-radius:14px;background:#fff"></div><div class="t" style="left:83.6px;top:232.16px;font-size:12.8px;color:#22506e;font-weight:normal;letter-spacing:0.185px;">Keyword</div>
<svg style="left:278px;top:229px" width="18" height="18"><circle cx="7.8" cy="7.8" r="4.3" fill="none" stroke="#1d5f84" stroke-width="1.5"/><path d="M11 11 L14.5 14.5" stroke="#0d3f5e" stroke-width="2.3" stroke-linecap="round"/></svg><div class="a" style="left:168px;top:289px;width:133px;height:96px;border-radius:6px;background:#fff;overflow:hidden"><div class="a" style="left:0;top:23px;width:133px;height:1px;background:#b5e3f5"></div><div class="a" style="left:0;top:48px;width:133px;height:1px;background:#b5e3f5"></div><div class="a" style="left:0;top:72px;width:133px;height:1px;background:#b5e3f5"></div></div><div class="t" style="left:126.29999999999998px;top:294.96px;font-size:12.8px;color:#1d5878;font-weight:normal;letter-spacing:0.397px;">Filter</div>
<div class="t" style="left:89.19999999999999px;top:319.96px;font-size:12.8px;color:#1d5878;font-weight:normal;letter-spacing:-0.088px;">Date Range</div>
<div class="t" style="left:95.79999999999998px;top:344.46px;font-size:12.8px;color:#1d5878;font-weight:normal;letter-spacing:0.053px;">From Date</div>
<div class="t" style="left:111.99999999999999px;top:369.46px;font-size:12.8px;color:#1d5878;font-weight:normal;letter-spacing:0.101px;">To Date</div>
<div class="t" style="left:178.3px;top:294.96px;font-size:12.8px;color:#1f4e6b;font-weight:normal;letter-spacing:0.100px;">Study Date</div>
<div class="t" style="left:178.3px;top:319.96px;font-size:12.8px;color:#1f4e6b;font-weight:normal;letter-spacing:0.063px;">Select</div>
<div class="t" style="left:178.3px;top:343.36px;font-size:12.8px;color:#1f4e6b;font-weight:normal;letter-spacing:0.101px;">dd.mm.yyyy</div>
<div class="t" style="left:178.3px;top:367.36px;font-size:12.8px;color:#3e6f8c;font-weight:normal;letter-spacing:0.101px;">dd.mm.yyyy</div>
<svg style="left:281px;top:295.5px" width="16" height="10"><path d="M2.5 2.5 L8 7.5 L13.5 2.5" fill="none" stroke="#0c4566" stroke-width="2"/></svg><svg style="left:281px;top:320px" width="16" height="10"><path d="M2.5 2.5 L8 7.5 L13.5 2.5" fill="none" stroke="#0c4566" stroke-width="2"/></svg><svg style="left:281px;top:346px" width="16" height="10"><path d="M2.5 2.5 L8 7.5 L13.5 2.5" fill="none" stroke="#0c4566" stroke-width="2"/></svg><svg style="left:281px;top:370.5px" width="16" height="10"><path d="M2.5 2.5 L8 7.5 L13.5 2.5" fill="none" stroke="#0c4566" stroke-width="2"/></svg><div class="t" style="left:87.4px;top:413.96px;font-size:12.8px;color:#1f6c95;font-weight:normal;letter-spacing:0.517px;">Modality</div>
<div class="a" style="left:75px;top:441px;width:47px;height:16.5px;border-radius:8.25px;background:linear-gradient(#e4e6ea,#eef0f2);box-shadow:0 1px 1.5px rgba(0,0,0,.22), inset 0 0 0 0.6px #d6dadf"></div><div class="a" style="left:75.6px;top:441.8px;width:14.8px;height:14.8px;border-radius:7.4px;background:#fff;box-shadow:0 1px 1.5px rgba(0,0,0,.28)"></div><div class="t" style="right:1266px;top:443.52px;font-size:11.2px;color:#4f5f72;font-weight:normal;">MR</div>
<div class="a" style="left:131px;top:441px;width:47px;height:16.5px;border-radius:8.25px;background:linear-gradient(#e4e6ea,#eef0f2);box-shadow:0 1px 1.5px rgba(0,0,0,.22), inset 0 0 0 0.6px #d6dadf"></div><div class="a" style="left:131.6px;top:441.8px;width:14.8px;height:14.8px;border-radius:7.4px;background:#fff;box-shadow:0 1px 1.5px rgba(0,0,0,.28)"></div><div class="t" style="right:1210px;top:443.52px;font-size:11.2px;color:#4f5f72;font-weight:normal;">CT</div>
<div class="a" style="left:187px;top:441px;width:47px;height:16.5px;border-radius:8.25px;background:linear-gradient(#e4e6ea,#eef0f2);box-shadow:0 1px 1.5px rgba(0,0,0,.22), inset 0 0 0 0.6px #d6dadf"></div><div class="a" style="left:187.6px;top:441.8px;width:14.8px;height:14.8px;border-radius:7.4px;background:#fff;box-shadow:0 1px 1.5px rgba(0,0,0,.28)"></div><div class="t" style="right:1154px;top:443.52px;font-size:11.2px;color:#4f5f72;font-weight:normal;">PT</div>
<div class="a" style="left:243px;top:441px;width:47px;height:16.5px;border-radius:8.25px;background:linear-gradient(#e4e6ea,#eef0f2);box-shadow:0 1px 1.5px rgba(0,0,0,.22), inset 0 0 0 0.6px #d6dadf"></div><div class="a" style="left:243.6px;top:441.8px;width:14.8px;height:14.8px;border-radius:7.4px;background:#fff;box-shadow:0 1px 1.5px rgba(0,0,0,.28)"></div><div class="t" style="right:1098px;top:443.52px;font-size:11.2px;color:#4f5f72;font-weight:normal;">CR</div>
<div class="a" style="left:75px;top:469px;width:47px;height:16.5px;border-radius:8.25px;background:linear-gradient(#e4e6ea,#eef0f2);box-shadow:0 1px 1.5px rgba(0,0,0,.22), inset 0 0 0 0.6px #d6dadf"></div><div class="a" style="left:75.6px;top:469.8px;width:14.8px;height:14.8px;border-radius:7.4px;background:#fff;box-shadow:0 1px 1.5px rgba(0,0,0,.28)"></div><div class="t" style="right:1266px;top:471.52px;font-size:11.2px;color:#4f5f72;font-weight:normal;">DX</div>
<div class="a" style="left:131px;top:469px;width:47px;height:16.5px;border-radius:8.25px;background:linear-gradient(#e4e6ea,#eef0f2);box-shadow:0 1px 1.5px rgba(0,0,0,.22), inset 0 0 0 0.6px #d6dadf"></div><div class="a" style="left:131.6px;top:469.8px;width:14.8px;height:14.8px;border-radius:7.4px;background:#fff;box-shadow:0 1px 1.5px rgba(0,0,0,.28)"></div><div class="t" style="right:1210px;top:471.52px;font-size:11.2px;color:#4f5f72;font-weight:normal;">US</div>
<div class="a" style="left:187px;top:469px;width:47px;height:16.5px;border-radius:8.25px;background:linear-gradient(#e4e6ea,#eef0f2);box-shadow:0 1px 1.5px rgba(0,0,0,.22), inset 0 0 0 0.6px #d6dadf"></div><div class="a" style="left:187.6px;top:469.8px;width:14.8px;height:14.8px;border-radius:7.4px;background:#fff;box-shadow:0 1px 1.5px rgba(0,0,0,.28)"></div><div class="t" style="right:1154px;top:471.52px;font-size:11.2px;color:#4f5f72;font-weight:normal;">MG</div>
<div class="a" style="left:243px;top:469px;width:47px;height:16.5px;border-radius:8.25px;background:linear-gradient(#e4e6ea,#eef0f2);box-shadow:0 1px 1.5px rgba(0,0,0,.22), inset 0 0 0 0.6px #d6dadf"></div><div class="a" style="left:243.6px;top:469.8px;width:14.8px;height:14.8px;border-radius:7.4px;background:#fff;box-shadow:0 1px 1.5px rgba(0,0,0,.28)"></div><div class="t" style="right:1098px;top:471.52px;font-size:11.2px;color:#4f5f72;font-weight:normal;">OT</div>
<div class="t" style="left:87.4px;top:511.16px;font-size:12.8px;color:#1d5878;font-weight:normal;letter-spacing:0.174px;">Location</div>
<div class="a" style="left:73px;top:532px;width:230px;height:28px;border-radius:6px;background:#fff"></div><div class="t" style="left:83.9px;top:541.36px;font-size:12.8px;color:#22506e;font-weight:normal;letter-spacing:0.002px;">1 Selected</div>
<svg style="left:283px;top:541px" width="16" height="10"><path d="M2.5 2.5 L8 7.5 L13.5 2.5" fill="none" stroke="#0c4566" stroke-width="2"/></svg><div class="a" style="left:111px;top:607px;width:61px;height:32px;border-radius:4px;background:#1196cc"></div><div class="a" style="left:192px;top:607px;width:71px;height:32px;border-radius:4px;background:#1196cc"></div><div class="t" style="left:125.7px;top:616.92px;font-size:13.8px;color:#fff;font-weight:normal;-webkit-text-stroke:0.25px #fff;letter-spacing:-0.046px;">Clear</div>
<div class="t" style="left:206.5px;top:616.92px;font-size:13.8px;color:#fff;font-weight:normal;-webkit-text-stroke:0.25px #fff;letter-spacing:-0.429px;">Search</div>
<div class="a" style="left:322px;top:133px;width:1052px;height:704px;border:1px solid #dfe3e6;border-radius:9px 9px 0 0"></div><div class="a" style="left:323px;top:134px;width:1050px;height:36px;background:#4ac3e0;border-radius:8px 8px 0 0"></div><div class="t" style="left:333.5px;top:144.80px;font-size:13px;color:#fff;font-weight:normal;-webkit-text-stroke:0.35px #fff;letter-spacing:-0.131px;">Status</div>
<div class="t" style="left:408.9px;top:144.80px;font-size:13px;color:#fff;font-weight:normal;-webkit-text-stroke:0.35px #fff;letter-spacing:0.084px;">Patient Name</div>
<div class="t" style="left:540.9px;top:144.80px;font-size:13px;color:#fff;font-weight:normal;-webkit-text-stroke:0.35px #fff;letter-spacing:0.164px;">Patient Id</div>
<div class="t" style="left:641.9px;top:144.80px;font-size:13px;color:#fff;font-weight:normal;-webkit-text-stroke:0.35px #fff;letter-spacing:-0.254px;">Accession No</div>
<div class="t" style="left:770.5px;top:144.80px;font-size:13px;color:#fff;font-weight:normal;-webkit-text-stroke:0.35px #fff;letter-spacing:0.354px;">Modality</div>
<div class="t" style="left:864.0px;top:144.80px;font-size:13px;color:#fff;font-weight:normal;-webkit-text-stroke:0.35px #fff;letter-spacing:0.024px;">Study Date</div>
<div class="t" style="left:1043.0px;top:144.80px;font-size:13px;color:#fff;font-weight:normal;-webkit-text-stroke:0.35px #fff;letter-spacing:0.123px;">Location</div>
<div class="t" style="left:1136.5px;top:144.80px;font-size:13px;color:#fff;font-weight:normal;-webkit-text-stroke:0.35px #fff;letter-spacing:-0.288px;">Images</div>
<div class="t" style="left:1218.0px;top:144.80px;font-size:13px;color:#fff;font-weight:normal;-webkit-text-stroke:0.35px #fff;letter-spacing:0.095px;">Documents Count</div>
<svg style="left:416px;top:137px" width="12" height="9"><path d="M1 8 L6 1.5 L11 8 Z" fill="#fff"/></svg><div class="a" style="left:323px;top:203px;width:1050px;height:1px;background:#e3e6e9"></div><div class="a" style="left:323px;top:204px;width:1050px;height:34px;background:#a0d8f2"></div><div class="a" style="left:323px;top:272px;width:1050px;height:1px;background:#e3e6e9"></div><div class="t" style="left:407.8px;top:181.36px;font-size:12.8px;color:#2f3b47;font-weight:normal;letter-spacing:-0.376px;">PATIENT I</div>
<div class="t" style="left:539.7px;top:181.36px;font-size:12.8px;color:#2f3b47;font-weight:normal;letter-spacing:0.082px;">045678</div>
<div class="t" style="left:641.2px;top:181.36px;font-size:12.8px;color:#2f3b47;font-weight:normal;letter-spacing:-0.597px;">NONE</div>
<div class="t" style="left:769.3px;top:181.36px;font-size:12.8px;color:#2f3b47;font-weight:normal;letter-spacing:-1.000px;">MR</div>
<div class="t" style="left:863.0px;top:181.36px;font-size:12.8px;color:#2f3b47;font-weight:normal;letter-spacing:0.059px;">01.01.1921 00:00:00</div>
<div class="t" style="left:1042.5px;top:181.36px;font-size:12.8px;color:#2f3b47;font-weight:normal;letter-spacing:0.554px;">Default</div>
<div class="t" style="left:1136.0px;top:181.36px;font-size:12.8px;color:#2f3b47;font-weight:normal;letter-spacing:-0.708px;">39</div>
<div class="t" style="left:1217.5px;top:181.36px;font-size:12.8px;color:#2f3b47;font-weight:normal;letter-spacing:0.000px;">0</div>
<svg style="left:331px;top:175.0px" width="24" height="24"><rect x="1.7" y="0.7" width="14.6" height="17.6" rx="2" fill="#fff" stroke="#4b96c2" stroke-width="1.4"/><path d="M4.3 3.5 H13.5 M3.5 6.8 H14.5 M4.5 10 H13 M8.6 2.2 V14 M5.5 10 L5 14" fill="none" stroke="#4a586a" stroke-width="1.1"/><circle cx="16" cy="14.8" r="6.5" fill="#fff" stroke="#6aaad2" stroke-width="1.1"/><path d="M11.8 15 L13.6 17 L16.6 13 M15.2 16.2 L16.2 17 L19.8 12.8" fill="none" stroke="#3d4a5a" stroke-width="1.2"/></svg><div class="t" style="left:407.8px;top:215.26px;font-size:12.8px;color:#fff;font-weight:normal;-webkit-text-stroke:0.25px #fff;letter-spacing:-0.355px;">PATIENT II</div>
<div class="t" style="left:539.7px;top:215.26px;font-size:12.8px;color:#fff;font-weight:normal;-webkit-text-stroke:0.25px #fff;letter-spacing:0.091px;">0345678</div>
<div class="t" style="left:641.2px;top:215.26px;font-size:12.8px;color:#fff;font-weight:normal;-webkit-text-stroke:0.25px #fff;letter-spacing:-0.597px;">NONE</div>
<div class="t" style="left:769.3px;top:215.26px;font-size:12.8px;color:#fff;font-weight:normal;-webkit-text-stroke:0.25px #fff;letter-spacing:-1.000px;">MR</div>
<div class="t" style="left:863.0px;top:215.26px;font-size:12.8px;color:#fff;font-weight:normal;-webkit-text-stroke:0.25px #fff;letter-spacing:0.059px;">01.01.1921 00:00:00</div>
<div class="t" style="left:1042.5px;top:215.26px;font-size:12.8px;color:#fff;font-weight:normal;-webkit-text-stroke:0.25px #fff;letter-spacing:0.554px;">Default</div>
<div class="t" style="left:1136.0px;top:215.26px;font-size:12.8px;color:#fff;font-weight:normal;-webkit-text-stroke:0.25px #fff;letter-spacing:0.000px;">576</div>
<div class="t" style="left:1217.5px;top:215.26px;font-size:12.8px;color:#fff;font-weight:normal;-webkit-text-stroke:0.25px #fff;letter-spacing:0.000px;">0</div>
<svg style="left:331px;top:209.5px" width="24" height="24"><rect x="1.7" y="0.7" width="14.6" height="17.6" rx="2" fill="#fff" stroke="#4b96c2" stroke-width="1.4"/><path d="M4.3 3.5 H13.5 M3.5 6.8 H14.5 M4.5 10 H13 M8.6 2.2 V14 M5.5 10 L5 14" fill="none" stroke="#4a586a" stroke-width="1.1"/><circle cx="16" cy="14.8" r="6.5" fill="#fff" stroke="#6aaad2" stroke-width="1.1"/><path d="M11.8 15 L13.6 17 L16.6 13 M15.2 16.2 L16.2 17 L19.8 12.8" fill="none" stroke="#3d4a5a" stroke-width="1.2"/></svg><div class="t" style="left:407.8px;top:250.16px;font-size:12.8px;color:#2f3b47;font-weight:normal;letter-spacing:-0.358px;">PATIENT III</div>
<div class="t" style="left:539.7px;top:250.16px;font-size:12.8px;color:#2f3b47;font-weight:normal;letter-spacing:0.163px;">02456789</div>
<div class="t" style="left:641.2px;top:250.16px;font-size:12.8px;color:#2f3b47;font-weight:normal;letter-spacing:-0.597px;">NONE</div>
<div class="t" style="left:769.3px;top:250.16px;font-size:12.8px;color:#2f3b47;font-weight:normal;letter-spacing:-1.000px;">MR</div>
<div class="t" style="left:863.0px;top:250.16px;font-size:12.8px;color:#2f3b47;font-weight:normal;letter-spacing:0.059px;">01.01.1921 00:00:00</div>
<div class="t" style="left:1042.5px;top:250.16px;font-size:12.8px;color:#2f3b47;font-weight:normal;letter-spacing:0.554px;">Default</div>
<div class="t" style="left:1136.0px;top:250.16px;font-size:12.8px;color:#2f3b47;font-weight:normal;letter-spacing:0.000px;">173</div>
<div class="t" style="left:1217.5px;top:250.16px;font-size:12.8px;color:#2f3b47;font-weight:normal;letter-spacing:0.000px;">0</div>
<svg style="left:331px;top:244.0px" width="24" height="24"><rect x="1.7" y="0.7" width="14.6" height="17.6" rx="2" fill="#fff" stroke="#4b96c2" stroke-width="1.4"/><path d="M4.3 3.5 H13.5 M3.5 6.8 H14.5 M4.5 10 H13 M8.6 2.2 V14 M5.5 10 L5 14" fill="none" stroke="#4a586a" stroke-width="1.1"/><circle cx="16" cy="14.8" r="6.5" fill="#fff" stroke="#6aaad2" stroke-width="1.1"/><path d="M11.8 15 L13.6 17 L16.6 13 M15.2 16.2 L16.2 17 L19.8 12.8" fill="none" stroke="#3d4a5a" stroke-width="1.2"/></svg><div class="a" style="left:322px;top:839px;width:1052px;height:35px;background:#f4f4f4"></div><div class="t" style="left:332.3px;top:845.65px;font-size:11.4px;color:#1b5a80;font-weight:normal;letter-spacing:0.187px;">Record</div>
<div class="t" style="left:332.3px;top:856.98px;font-size:11.6px;color:#1b5a80;font-weight:bold;">3 (1 - 3)</div>
<svg style="left:754px;top:849px" width="190" height="16"><path d="M7 2.5 L3 7.5 L7 12.5 M12 2.5 L8 7.5 L12 12.5" fill="none" stroke="#16577e" stroke-width="2.2"/><path d="M81.5 2.5 L77.5 7.5 L81.5 12.5" fill="none" stroke="#16577e" stroke-width="2"/><path d="M129 2.5 L133 7.5 L129 12.5" fill="none" stroke="#16577e" stroke-width="2"/><path d="M177 2.5 L181 7.5 L177 12.5 M182 2.5 L186 7.5 L182 12.5" fill="none" stroke="#16577e" stroke-width="2.2"/></svg><div class="t" style="left:771.9px;top:850.76px;font-size:12.8px;color:#16577e;font-weight:normal;letter-spacing:0.230px;">Previous</div>
<svg style="left:840px;top:846px" width="40" height="22"><g fill="none" stroke="#16577e" stroke-width="2.4" stroke-linejoin="round"><path d="M5.2 8.8 L8.9 6.3 V17"/><path d="M27.8 8.8 L31.5 6.3 V17"/></g><path d="M16.6 19.6 L22.6 4" stroke="#16577e" stroke-width="2"/></svg><div class="t" style="left:896.0px;top:850.76px;font-size:12.8px;color:#16577e;font-weight:normal;letter-spacing:0.632px;">Next</div>
<div class="a" style="left:1186px;top:845px;width:138px;height:24px;border-radius:6px;background:#fff;border:1px solid #8ccff0"></div><div class="t" style="left:1237.7px;top:850.03px;font-size:13.2px;color:#28587a;font-weight:normal;letter-spacing:0.399px;">Filter</div>
<svg style="left:1338px;top:846px" width="24" height="22"><rect x="9" y="3.5" width="12" height="15" fill="#fff" stroke="#4caf50" stroke-width="1"/><path d="M12 3.5 V18.5 M15 3.5 V18.5 M18 3.5 V18.5 M9 7 H21 M9 10.5 H21 M9 14 H21" stroke="#4caf50" stroke-width="0.9"/><path d="M1 4 L12 1.5 V20.5 L1 18 Z" fill="#4caf50"/><path d="M3.8 7.5 L8.2 14.5 M8.2 7.5 L3.8 14.5" stroke="#fff" stroke-width="1.2"/></svg><div class="a" style="left:1207px;top:667px;width:120px;height:120px;border-radius:60px;background:#fff;box-shadow:0 0 9px 3px rgba(0,0,0,.25)"></div><svg style="left:1207px;top:667px" width="120" height="120"><line x1="80.50" y1="60.50" x2="120.00" y2="60.50" stroke="#d0d0d0" stroke-width="0.7"/><line x1="70.25" y1="78.25" x2="90.00" y2="112.46" stroke="#d0d0d0" stroke-width="0.7"/><line x1="49.75" y1="78.25" x2="30.00" y2="112.46" stroke="#d0d0d0" stroke-width="0.7"/><line x1="39.50" y1="60.50" x2="0.00" y2="60.50" stroke="#d0d0d0" stroke-width="0.7"/><line x1="49.75" y1="42.75" x2="30.00" y2="8.54" stroke="#d0d0d0" stroke-width="0.7"/><line x1="70.25" y1="42.75" x2="90.00" y2="8.54" stroke="#d0d0d0" stroke-width="0.7"/><circle cx="60.5" cy="60" r="20.5" fill="#fff" stroke="#c8c8c8" stroke-width="1"/><circle cx="58" cy="55" r="5" fill="#2a8ab2"/><path d="M49 70 Q49.5 62 58 61.5 Q66.5 62 67 70 Z" fill="#2a8ab2"/><path d="M68.5 50.5 V57.5 M65 54 H72" stroke="#2a8ab2" stroke-width="1.6"/><path d="M51.5 9 H56 L57 10.2 H63 V13 H54 L51.5 24 Z" fill="#0e6085"/><path d="M53.5 14.5 H71.5 L68.5 25 H51 Z" fill="#0e6085"/><path d="M14.5 30 Q14.5 29 15.5 29 H21.5 L23 31 H33 Q34.5 31 34.5 32.5 V44.5 Q34.5 46 33 46 H16 Q14.5 46 14.5 44.5 Z" fill="#0e6085"/><path d="M24.5 34 V42 M20.5 38 H28.5" stroke="#fff" stroke-width="1.8"/><path d="M88 29.5 H98 L102 33.5 V47 H88 Z" fill="#fff" stroke="#0e6085" stroke-width="1.4"/><path d="M90.5 33 H96 M90.5 36 H99.5 M90.5 39 H99.5 M90.5 42 H96" stroke="#0e6085" stroke-width="1.1"/><circle cx="101.5" cy="45" r="4.8" fill="#0e6085" stroke="#fff" stroke-width="1"/><path d="M101.5 42.3 V47.7 M98.8 45 H104.2" stroke="#fff" stroke-width="1.3"/><circle cx="102.5" cy="75" r="2.7" fill="#0e6085"/><circle cx="90" cy="81" r="2.7" fill="#0e6085"/><circle cx="102.5" cy="87" r="2.7" fill="#0e6085"/><path d="M102.5 75 L90 81 L102.5 87" fill="none" stroke="#0e6085" stroke-width="1.6"/><path d="M57 93 H62.5 V94.5 H67 V96.3 H52.5 V94.5 H57 Z" fill="#0e6085"/><path d="M53.5 97.5 H66 V111 H53.5 Z" fill="#0e6085"/><path d="M56.8 99.5 V109 M59.75 99.5 V109 M62.7 99.5 V109" stroke="#fff" stroke-width="1.2"/><rect x="15.3" y="70.3" width="16.4" height="19" fill="#fff" stroke="#0e6085" stroke-width="1.3"/><rect x="17.5" y="72.8" width="4" height="5" fill="#0e6085"/><path d="M23 73.5 H30 M23 76.5 H30 M17.5 80.5 H26 M17.5 83.5 H24 M17.5 86.5 H22" stroke="#0e6085" stroke-width="1.2"/><path d="M23.5 87.5 L29.5 81.5" stroke="#0e6085" stroke-width="1.8"/></svg><div class="a" style="left:0;top:0;width:1380px;height:1px;background:#535866"></div><div class="a" style="left:0;top:0;width:1px;height:880px;background:linear-gradient(#0f3a5c,#174a62)"></div><div class="a" style="left:1379px;top:0;width:1px;height:880px;background:#0d2b57"></div><div class="a" style="left:0;top:879px;width:1380px;height:1px;background:linear-gradient(90deg,#164a62,#0f3d5c 40%,#0d2b57)"></div>
</body></html>
